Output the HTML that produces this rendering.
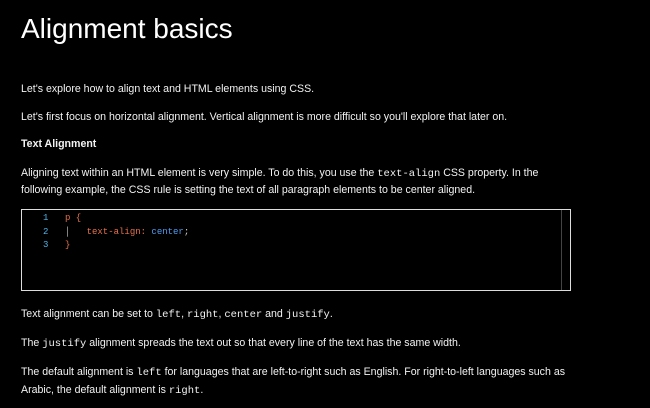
<!DOCTYPE html>
<html><head><style>
body{margin:0;background:#000;width:650px;height:408px;overflow:hidden;font-family:"Liberation Sans",sans-serif;color:#f2f2f2;}
.t{position:absolute;left:21px;font-size:10.6px;white-space:nowrap;line-height:12px}
h1{position:absolute;left:21px;top:10px;margin:0;font-weight:normal;font-size:28px;line-height:38px;color:#fff}
code{font-family:"Liberation Mono",monospace;font-size:10.5px}
.box{position:absolute;left:21px;top:209px;width:548px;height:80px;border:1px solid #ddd}
.vl{position:absolute;left:539px;top:0;width:1px;height:80px;background:#444}
.c{position:absolute;font-family:"Liberation Mono",monospace;font-size:9px;line-height:13.5px;white-space:pre}
</style></head><body>
<h1>Alignment basics</h1>
<div class="t" style="top:83px">Let's explore how to align text and HTML elements using CSS.</div>
<div class="t" style="top:111px">Let's first focus on horizontal alignment. Vertical alignment is more difficult so you'll explore that later on.</div>
<div class="t" style="top:138px;font-weight:bold">Text Alignment</div>
<div class="t" style="top:167px">Aligning text within an HTML element is very simple. To do this, you use the <code>text-align</code> CSS property. In the</div>
<div class="t" style="top:184px">following example, the CSS rule is setting the text of all paragraph elements to be center aligned.</div>
<div class="box"><div class="vl"></div>
<div class="c" style="left:21px;top:2px;color:#4fb3e8">1
2
3</div>
<div class="c" style="left:43px;top:2px;color:#e8714a">p {
<span style="color:#ccc">│</span>   text-align: <span style="color:#4e9cf0">center</span><span style="color:#ccc">;</span>
}</div>
</div>
<div class="t" style="top:308px">Text alignment can be set to <code>left</code>, <code>right</code>, <code>center</code> and <code>justify</code>.</div>
<div class="t" style="top:337px">The <code>justify</code> alignment spreads the text out so that every line of the text has the same width.</div>
<div class="t" style="top:366px">The default alignment is <code>left</code> for languages that are left-to-right such as English. For right-to-left languages such as</div>
<div class="t" style="top:384px">Arabic, the default alignment is <code>right</code>.</div>
</body></html>
